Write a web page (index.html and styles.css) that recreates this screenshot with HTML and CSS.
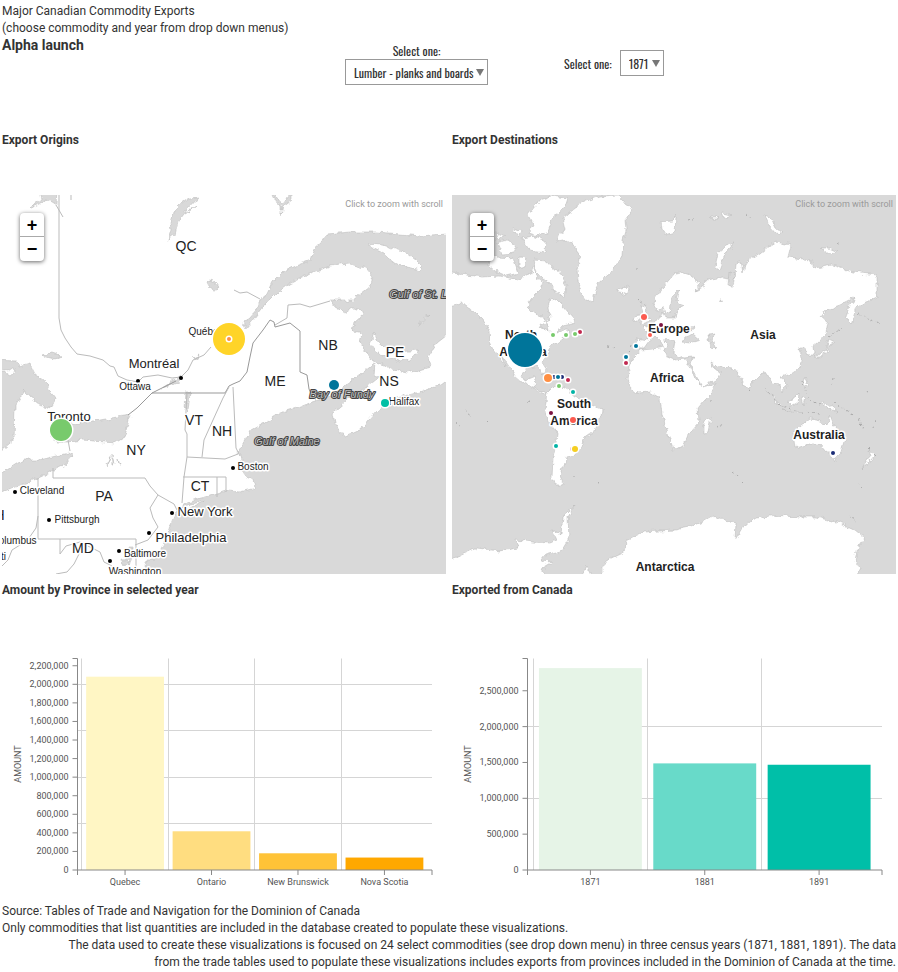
FILE: index.html
```html
<!DOCTYPE html>
<html lang="en">

<head>
    <meta charset="UTF-8">
    <meta name="viewport" content="width=device-width, initial-scale=1.0">
    <title>Major Canadian Commodity Exports</title>
    <link rel="stylesheet" href="styles.css">
</head>

<body>

    <header>
        <div class="intro">
            <p>Major Canadian Commodity Exports</p>
            <p>(choose commodity and year from drop down menus)</p>
            <h1>Alpha launch</h1>
        </div>
        <div class="filter filter-commodity">
            <label for="commodity">Select one:</label>
            <span class="select">
                <select id="commodity">
                    <option>Lumber - planks and boards</option>
                </select>
            </span>
        </div>
        <div class="filter filter-year">
            <label for="year">Select one:</label>
            <span class="select">
                <select id="year">
                    <option>1871</option>
                    <option>1881</option>
                    <option>1891</option>
                </select>
            </span>
        </div>
    </header>

    <main class="panels">
        <section>
            <h2>Export Origins</h2>
            <div class="map">
                <svg viewBox="2 195 444 379" role="img" aria-label="Map of export origins">
                    <defs>
                        <filter id="coast" x="-5%" y="-5%" width="110%" height="110%" color-interpolation-filters="sRGB">
                            <feTurbulence type="fractalNoise" baseFrequency="0.16" numOctaves="3" seed="4" />
                            <feDisplacementMap in="SourceGraphic" scale="6" xChannelSelector="R" yChannelSelector="G" />
                        </filter>
                    </defs>
                    <rect class="land" x="2" y="195" width="444" height="379" />

                    <g class="water" filter="url(#coast)">
                        <!-- Gulf of St. Lawrence and river -->
                        <path d="M460 232L446 234 420 236 400 234 377 232 350 232 327 234 322 242 315 248 311 260 298 265 283 272 273 282 268 293 260 300 257 310 250 318 243 323 246 329 252 322 265 305 277 293 290 283 310 273 330 266 350 264 365 268 373 277 370 287 362 293 353 300 343 300 330 300 335 307 345 313 353 308 362 310 364 314 355 322 353 331 362 333 360 343 367 353 373 361 380 363 393 370 407 373 420 370 430 367 428 357 437 343 446 336 460 332Z" />
                        <!-- Atlantic and Bay of Fundy -->
                        <path d="M460 370L440 385 420 392 393 399 377 410 368 420 360 430 345 437 335 423 333 412 345 402 352 393 367 387 382 375 374 376 375 363 360 375 348 384 337 390 328 397 312 402 300 407 280 413 263 423 250 430 245 440 238 452 242 460 240 468 246 476 253 480 255 488 240 492 227 491 214 495 200 498 187 502 176 512 172 521 170 529 163 545 155 560 147 560 145 565 152 590 460 590Z" />
                        <!-- Great Lakes -->
                        <path d="M-8 360L17 361 19 367 30 364 35 374 47 382 49 390 55 398 52 408 40 405 30 397 22 388 23 393 15 407 14 440 2 450 -8 452Z" />
                        <path d="M-8 477L2 473 23 460 40 460 68 453 73 456 65 465 33 480 2 492 -8 495Z" />
                        <path d="M50 437L60 428 73 424 100 420 117 417 130 415 127 427 125 437 115 443 83 440 68 442 56 442Z" />
                        <!-- inland lakes and the south end of James Bay -->
                        <path d="M30 208L42 199 40 190 57 190 56 205 48 200Z" />
                        <path d="M190 198L199 197 187 210 178 222 175 235 169 240 172 230 171 222 175 210 182 203Z" />
                        <path d="M185 214L196 206 188 212Z" />
                        <path d="M271 190L276 202 281 206 281 216 283 206 291 200 291 190 286 200 281 203 276 196Z" />
                        <path d="M41 355L52 353 61 356 54 359 47 357Z" />
                        <path d="M206 282C210 277 218 283 219 288C217 292 209 290 206 282Z" />
                        <path d="M186 392L190 392 188 412 185 408Z" />
                        <path d="M107 464L110 457 108 466ZM112 455L114 464 113 464ZM118 459L120 465 119 465Z" />
                        <path d="M193 358L199 355 196 360ZM162 388L176 379 181 375 178 383Z" />
                        <path d="M129 548L133 548 132 556 129 566 127 566ZM122 560L128 562 125 566Z" />
                    </g>

                    <g class="island" filter="url(#coast)">
                        <path d="M368 244L383 245 395 249 407 253 416 260 423 267 420 270 408 267 397 265 388 258 383 253 370 247Z" />
                        <path d="M370 343L375 333 378 342 387 349 400 352 418 350 410 360 397 361 385 357 377 353Z" />
                        <path d="M419 326L422 320 430 315 423 321Z" />
                        <path d="M-8 369L8 371 14 367 16 371 10 376 4 372 -8 372Z" />
                        <path d="M180 508L190 504 205 501 192 507 182 511Z" />
                    </g>

                    <!-- provincial and state borders -->
                    <g class="border">
                        <path d="M59 195V318L61 330 65 338 71 347 77 354 90 356 103 360 110 366 114 367 118 376 127 380 138 382 143 377 158 375 172 378 181 377 188 370 193 360 204 355 211 347" />
                        <path d="M56 205L63 217M71 195V200M234 290L240 293 247 292 260 299" />
                        <path class="strong" d="M128 415L137 408 152 393 160 389 176 381M152 393H225L229 386 233 384 240 381 247 372 250 357 253 343 263 330 270 320 274 322 275 327 290 323 300 331V372L307 375 309 389 313 398" />
                        <path d="M275 325L287 318 288 305 300 304 310 307 330 301M233 387L236 448 240 456M229 387L223 398 213 420 204 440 202 457M187 393L185 430 187 434V457L184 477 182 503M187 457L225 459 238 454M183 477H226V492M217 477V497" />
                        <path d="M53 468V478H145L150 486 158 495 150 508 153 518 158 527 148 540 135 545M158 495L174 504 178 512M38 478V539H136V574M38 516L36 528 29 538 20 545 12 550 8 560 2 566M60 539V554L66 546 80 542 92 548 100 552 104 562 112 566M81 550L74 564 67 572 56 574M68 440L70 451" />
                    </g>

                    <g class="city">
                        <circle cx="138" cy="381" r="2" />
                        <circle cx="181" cy="378" r="2" />
                        <circle cx="233" cy="468" r="2" />
                        <circle cx="15" cy="492" r="2" />
                        <circle cx="49" cy="520" r="2" />
                        <circle cx="172" cy="513" r="2" />
                        <circle cx="149" cy="533" r="2" />
                        <circle cx="119" cy="551" r="2" />
                        <circle cx="110" cy="561" r="2" />
                    </g>

                    <g class="place region">
                        <text x="186" y="251">QC</text>
                        <text x="328" y="350">NB</text>
                        <text x="395" y="357">PE</text>
                        <text x="389" y="386">NS</text>
                        <text x="275" y="386">ME</text>
                        <text x="194" y="425">VT</text>
                        <text x="222" y="436">NH</text>
                        <text x="136" y="455">NY</text>
                        <text x="200" y="491">CT</text>
                        <text x="104" y="501">PA</text>
                        <text x="83" y="553">MD</text>
                        <text x="-6" y="520">OH</text>
                    </g>
                    <g class="place metro">
                        <text x="154" y="368">Montréal</text>
                        <text x="69" y="421">Toronto</text>
                        <text x="205" y="516">New York</text>
                        <text x="191" y="542">Philadelphia</text>
                    </g>
                    <g class="place town">
                        <text x="206" y="335">Québec</text>
                        <text x="135" y="390">Ottawa</text>
                        <text x="404" y="405">Halifax</text>
                        <text x="253" y="470">Boston</text>
                        <text x="42" y="494">Cleveland</text>
                        <text x="77" y="523">Pittsburgh</text>
                        <text x="145" y="557">Baltimore</text>
                        <text x="135" y="575">Washington</text>
                        <text x="14" y="544">Columbus</text>
                        <text x="-16" y="560">Cincinnati</text>
                    </g>
                    <g class="place sea">
                        <text x="439" y="298">Gulf of St. Lawrence</text>
                        <text x="342" y="398">Bay of Fundy</text>
                        <text x="287" y="445">Gulf of Maine</text>
                    </g>

                    <g class="marker">
                        <circle cx="229" cy="339" r="16" fill="#ffd428" />
                        <circle cx="229" cy="339" r="2" fill="#ff8f43" />
                        <circle cx="61" cy="430" r="11" fill="#78ca6c" />
                        <circle cx="334" cy="385" r="5" fill="#00759a" />
                        <circle cx="385" cy="403" r="4" fill="#00bfa5" />
                    </g>
                </svg>
                <div class="zoom">
                    <button type="button" aria-label="Zoom in">+</button>
                    <button type="button" aria-label="Zoom out">−</button>
                </div>
                <p class="hint">Click to zoom with scroll</p>
            </div>
        </section>

        <section>
            <h2>Export Destinations</h2>
            <div class="map">
                <svg viewBox="452 195 444 379" role="img" aria-label="Map of export destinations">
                    <rect class="ocean" x="452" y="195" width="444" height="379" />

                    <g class="island" filter="url(#coast)">
                        <!-- North and Central America -->
                        <path d="M440 270L452 273 467 275 483 277 500 276 517 280 530 275 534 266 537 278 543 282 540 290 531 299 527 307 533 313 542 316 547 323 550 318 548 308 550 298 557 300 563 306 573 318 575 323 563 326 557 333 566 330 571 331 563 337 557 342 550 347 546 356 541 362 547 371 545 374 538 366 527 368 522 375 525 381 535 377 534 388 540 391 547 391 545 394 537 391 530 386 522 382 515 376 510 367 502 355 506 366 498 355 490 345 489 330 483 320 475 312 463 303 452 305 440 308Z" />
                        <!-- Arctic islands -->
                        <path d="M528 215L540 200 552 196 568 198 565 207 553 217 548 232 538 236 529 233 533 225Z" />
                        <path d="M533 260L547 261 553 268 560 273 567 285 565 297 556 293 551 284 543 279 536 272Z" />
                        <path d="M490 258L500 257 513 258 518 273 507 276 495 271 488 265Z" />
                        <path d="M497 243L508 240 517 247 514 253 502 254ZM512 228L522 232 519 237ZM495 232L505 236 498 240ZM522 238L532 236 546 241 545 252 530 250ZM519 257L527 258 524 268 519 268Z" />
                        <!-- Greenland, Iceland -->
                        <path d="M557 242L560 234 566 230 563 218 573 210 583 202 600 196 619 195 625 203 633 209 625 220 626 230 623 240 622 257 613 270 602 279 596 290 592 303 588 302 582 295 578 282 577 270 580 258 575 245 566 240Z" />
                        <path d="M617 289L622 288 629 287 628 292 622 295Z" />
                        <!-- South America, Cuba -->
                        <path d="M547 392L552 387 560 386 572 393 583 402 594 406 602 409 601 415 597 422 594 431 584 438 581 447 575 455 567 457 565 462 562 467 560 477 564 485 557 485 552 477 553 457 556 443 557 432 550 424 545 411Z" />
                        <path d="M540 373L549 376 553 378 545 376Z" />
                        <!-- Africa, Madagascar -->
                        <path d="M640 350L653 349 664 347 666 356 675 360 686 359 690 368 696 380 703 387 716 383 712 393 704 401 698 408 699 422 689 433 683 446 673 449 667 432 662 414 660 398 650 392 637 393 630 387 627 380 628 370 632 360Z" />
                        <path d="M704 422L711 417 708 432 704 433Z" />
                        <!-- Europe and Asia -->
                        <path d="M635 348L636 338 647 340 648 332 643 327 652 324 660 319 662 312 665 318 675 318 678 308 685 305 676 302 679 290 672 297 670 312 665 315 663 307 656 311 653 302 663 287 675 273 681 272 690 275 701 284 695 291 705 286 706 280 723 277 735 279 736 263 741 262 743 273 746 262 760 253 766 248 776 242 791 245 788 257 810 260 815 268 833 265 853 272 877 275 877 297 866 302 856 308 851 323 846 318 849 305 856 297 840 305 826 310 821 317 828 323 826 333 817 343 813 346 814 355 807 355 805 348 798 348 802 356 800 367 788 375 781 377 787 386 783 392 780 385 773 384 765 372 761 374 753 382 748 391 741 378 733 368 720 367 711 362 714 369 723 373 715 380 702 387 690 364 694 357 682 358 673 353 675 341 666 338 664 341 668 345 665 350 661 342 655 336 648 342 643 349Z" />
                        <path d="M641 305L646 309 650 321 641 324 643 315ZM635 316L639 315 638 321 634 321ZM661 222L671 221 676 216 675 232 666 235 662 229Z" />
                        <path d="M715 267L718 253 726 246 735 243 724 256 719 270ZM765 215L771 218 776 228 783 233 777 235 769 226ZM821 248L829 248 838 252 827 253ZM708 218L716 215 719 218ZM722 213L731 215 724 218Z" />
                        <!-- Japan, South East Asia -->
                        <path d="M829 339L835 342 828 346 827 352 820 357 815 357 826 350ZM769 393L777 400 784 408 779 405ZM787 401L794 398 799 393 798 403 792 406ZM784 410L800 412 798 413ZM819 402L828 404 838 412 829 409ZM805 378L809 387 804 384ZM802 398L806 397 804 406Z" />
                        <!-- Australia, New Zealand -->
                        <path d="M795 448L793 433 799 427 810 418 820 420 826 426 830 415 834 425 845 438 841 452 835 458 827 453 820 445 806 445ZM833 459L837 459 835 463ZM869 450L875 455 870 461 862 469 867 461 871 456Z" />
                        <!-- Antarctica -->
                        <path d="M440 566L457 557 477 548 500 551 518 548 515 540 533 542 550 543 557 540 552 530 561 534 563 517 575 505 568 517 569 540 563 550 545 555 540 561 553 562 541 569 555 590 440 590Z" />
                        <path d="M582 575L587 566 592 575ZM602 585L602 568 606 561 623 553 628 540 643 532 675 530 690 527 700 523 713 516 720 519 736 522 735 540 742 528 756 518 776 515 793 517 816 517 840 523 855 530 865 538 858 547 855 560 860 568 853 585Z" />
                    </g>

                    <g class="water" filter="url(#coast)">
                        <path d="M682 342L685 337 693 334 700 340 690 343ZM708 335L716 334 712 339 716 350 711 347ZM690 328L694 326 693 330Z" />
                        <path d="M730 272L735 274 733 286 729 286ZM720 300L722 300 721 303ZM540 323L548 325 549 331 542 328Z" />
                    </g>

                    <!-- small islands -->
                    <g class="islets" filter="url(#coast)">
                        <path d="M464 411L471 416M456 423L461 426M487 420L488 421M528 401L532 402M572 477H576M598 482L602 485M607 346L615 348M636 269H639M638 298L645 306M631 345L629 352" />
                        <path d="M710 401H713M716 427L724 424M733 472L738 476M742 482L743 483M748 392L751 389M745 215L752 217M687 221L695 218M838 243L841 245M858 314L878 324M829 337L842 328" />
                        <path d="M764 388L779 404M780 405L801 412M802 412L819 414M803 382L808 397M809 400L820 405M834 403L855 415M859 419L864 430M875 421L873 427M868 448L876 456M857 484L862 488M850 516L858 523M833 378L832 384M866 390L871 397" />
                    </g>

                    <g class="place continent">
                        <text x="521" y="339">North</text>
                        <text x="523" y="356">America</text>
                        <text x="574" y="408">South</text>
                        <text x="574" y="425">America</text>
                        <text x="669" y="333">Europe</text>
                        <text x="763" y="339">Asia</text>
                        <text x="667" y="382">Africa</text>
                        <text x="819" y="439">Australia</text>
                        <text x="665" y="571">Antarctica</text>
                    </g>

                    <g class="marker">
                        <circle cx="525" cy="350" r="17" fill="#00759a" />
                        <circle cx="553" cy="335" r="2" fill="#78ca6c" />
                        <circle cx="566" cy="335" r="2" fill="#78ca6c" />
                        <circle cx="580" cy="332" r="2" fill="#c0284f" />
                        <circle cx="575" cy="334" r="2" fill="#78ca6c" />
                        <circle cx="562" cy="377" r="2" fill="#1c2d77" />
                        <circle cx="554" cy="377" r="2" fill="#1c2d77" />
                        <circle cx="558" cy="377" r="2" fill="#00759a" />
                        <circle cx="548" cy="378" r="4" fill="#ff8f43" />
                        <circle cx="568" cy="380" r="2" fill="#c0284f" />
                        <circle cx="559" cy="386" r="2" fill="#78ca6c" />
                        <circle cx="573" cy="392" r="2" fill="#00b3a5" />
                        <circle cx="551" cy="413" r="2" fill="#7d1542" />
                        <circle cx="573" cy="420" r="3" fill="#fb5a4f" />
                        <circle cx="556" cy="446" r="2" fill="#00b3a5" />
                        <circle cx="572" cy="449" r="2" fill="#f5a3a8" />
                        <circle cx="575" cy="449" r="3" fill="#f5ce22" />
                        <circle cx="644" cy="317" r="3" fill="#fb5a4f" />
                        <circle cx="661" cy="325" r="2" fill="#7d1542" />
                        <circle cx="650" cy="335" r="2" fill="#fb5a4f" />
                        <circle cx="636" cy="346" r="2" fill="#00759a" />
                        <circle cx="626" cy="357" r="2" fill="#00759a" />
                        <circle cx="626" cy="363" r="2" fill="#c0284f" />
                        <circle cx="833" cy="453" r="2" fill="#1c2d77" />
                    </g>
                </svg>
                <div class="zoom">
                    <button type="button" aria-label="Zoom in">+</button>
                    <button type="button" aria-label="Zoom out">−</button>
                </div>
                <p class="hint">Click to zoom with scroll</p>
            </div>
        </section>

        <section>
            <h2>Amount by Province in selected year</h2>
            <svg class="chart" id="provinceChart" viewBox="0 0 444 249"></svg>
        </section>

        <section>
            <h2>Exported from Canada</h2>
            <svg class="chart" id="yearChart" viewBox="0 0 444 249"></svg>
        </section>
    </main>

    <footer>
        <p>Source: Tables of Trade and Navigation for the Dominion of Canada</p>
        <p>Only commodities that list quantities are included in the database created to populate these visualizations.</p>
        <p class="note">The data used to create these visualizations is focused on 24 select commodities (see drop down menu) in three census years (1871, 1881, 1891). The data from the trade tables used to populate these visualizations includes exports from provinces included in the Dominion of Canada at the time.</p>
    </footer>

    <script src="charts.js"></script>
</body>

</html>
```

FILE: styles.css
```css
body {
    margin: 0;
    padding: 3px 2px;
    background-color: white;
    color: #333;
    font-family: Roboto, sans-serif;
    font-size: 12px;
    line-height: 17px;
}

p,
h1,
h2 {
    margin: 0;
}

h1 {
    font-size: 14px;
}

h2 {
    padding-top: 1px;
    height: 63px;
    font-size: 12px;
    font-weight: bold;
}

/* Header and drop down menus */
header {
    display: grid;
    grid-template-columns: 340px 149px 1fr;
    min-height: 128px;
}

.filter {
    font-family: Oswald, "Liberation Sans Narrow", sans-serif;
}

.filter-commodity {
    padding-top: 39px;
    text-align: center;
}

.filter-year {
    display: flex;
    align-items: center;
    align-self: start;
    gap: 8px;
    padding: 47px 0 0 73px;
}

.select {
    position: relative;
    display: inline-block;
}

.select::after {
    content: "";
    position: absolute;
    top: 10px;
    right: 4px;
    border: 4px solid transparent;
    border-top: 7px solid #777;
    border-bottom: 0;
    pointer-events: none;
}

select {
    appearance: none;
    display: block;
    height: 26px;
    padding: 0 12px 0 8px;
    border: 1px solid #999;
    border-radius: 0;
    background-color: white;
    color: #333;
    font: inherit;
}

#commodity {
    width: 143px;
}

#year {
    width: 44px;
}

.panels {
    display: grid;
    grid-template-columns: 1fr 1fr;
    column-gap: 6px;
    row-gap: 7px;
}

/* Maps */
.map {
    position: relative;
}

.map svg,
.chart {
    display: block;
    width: 100%;
}

.land,
.island {
    fill: white;
}

.ocean,
.water {
    fill: #d9d9d9;
}

.water,
.island {
    stroke: #b5b5b5;
    stroke-width: 0.5;
}

.border,
.islets {
    fill: none;
    stroke: #bbb;
}

.border .strong {
    stroke: #999;
}

.islets {
    stroke: #aaa;
    stroke-dasharray: 2 3;
}

.place {
    fill: #222;
    stroke: white;
    stroke-width: 3px;
    stroke-linejoin: round;
    paint-order: stroke;
    text-anchor: middle;
    font-family: "Liberation Sans", Arial, sans-serif;
}

.region {
    font-size: 14px;
}

.metro {
    font-size: 13px;
}

.town {
    font-size: 10px;
}

.sea {
    fill: #bbb;
    stroke: #444;
    stroke-width: 2px;
    font-size: 11px;
    font-style: italic;
}

.continent {
    font-size: 12px;
    font-weight: bold;
}

.marker {
    stroke: white;
    stroke-width: 3px;
    paint-order: stroke;
}

.zoom {
    position: absolute;
    top: 18px;
    left: 18px;
    width: 24px;
    border-radius: 4px;
    background-color: white;
    box-shadow: 0 1px 4px rgba(0, 0, 0, 0.6);
}

.zoom button {
    display: block;
    width: 24px;
    height: 24px;
    padding: 0;
    border: 0;
    background: none;
    color: black;
    font: bold 18px/24px "Liberation Sans", Arial, sans-serif;
}

.zoom button:first-child {
    border-bottom: 1px solid #aaa;
}

.hint {
    position: absolute;
    top: 1px;
    right: 3px;
    color: #999;
    font-size: 9px;
}

/* Bar charts */
.chart text {
    fill: #555;
    font-size: 9px;
}

.chart .axis {
    fill: none;
    stroke: #888;
}

.chart .grid {
    stroke: #d5d5d5;
}

footer {
    padding-top: 9px;
}

.note {
    padding-left: 48px;
    text-align: right;
}
```

FILE: charts.js
```js
const svgNS = 'http://www.w3.org/2000/svg';

// plot area inside the 444 x 249 viewBox
const left = 75.5;
const right = 430;
const topEdge = 13.5;
const bottom = 225;

function add(parent, tag, attrs, text) {
    const el = document.createElementNS(svgNS, tag);
    for (const key in attrs) {
        el.setAttribute(key, attrs[key]);
    }
    if (text) {
        el.textContent = text;
    }
    parent.appendChild(el);
}

function drawChart(id, data, max, tickStep, gridStep) {
    const svg = document.getElementById(id);
    const band = (right - left) / (data.length + 0.1);
    const y = value => bottom - value / max * (bottom - topEdge);

    for (let v = gridStep; v < max; v += gridStep) {
        const gy = Math.floor(y(v)) + 0.5;
        add(svg, 'path', { class: 'grid', d: `M${left} ${gy}H${right}` });
    }

    data.forEach((row, i) => {
        const x = left + band * (i + 0.1);
        const gx = Math.floor(x - band * 0.05) + 0.5;
        add(svg, 'path', { class: 'grid', d: `M${gx} ${topEdge}V${bottom}` });
        add(svg, 'rect', { x: x, y: y(row.amount), width: band * 0.9, height: bottom - y(row.amount), fill: row.color });
        const mid = x + band * 0.45;
        add(svg, 'path', { class: 'axis', d: `M${mid} ${bottom}v5` });
        add(svg, 'text', { x: mid, y: 240, 'text-anchor': 'middle' }, row.name);
    });

    for (let v = 0; v < max; v += tickStep) {
        add(svg, 'path', { class: 'axis', d: `M${left - 5} ${y(v)}h5` });
        add(svg, 'text', { x: left - 9, y: y(v) + 3, 'text-anchor': 'end' }, v.toLocaleString('en-US'));
    }

    add(svg, 'path', { class: 'axis', d: `M${left - 5} ${topEdge}H${left}V${bottom + 5}M${left} ${bottom}H${right}v5` });
    add(svg, 'text', { transform: 'translate(19 119) rotate(-90)', 'text-anchor': 'middle' }, 'AMOUNT');
}

drawChart('provinceChart', [
    { name: 'Quebec', amount: 2082000, color: '#fff6c4' },
    { name: 'Ontario', amount: 417000, color: '#ffdd80' },
    { name: 'New Brunswick', amount: 180000, color: '#ffc337' },
    { name: 'Nova Scotia', amount: 134000, color: '#ffa800' }
], 2278000, 200000, 500000);

drawChart('yearChart', [
    { name: '1871', amount: 2816000, color: '#e6f4e7' },
    { name: '1881', amount: 1487000, color: '#68dac9' },
    { name: '1891', amount: 1468000, color: '#00bfa8' }
], 2950000, 500000, 1000000);
```
